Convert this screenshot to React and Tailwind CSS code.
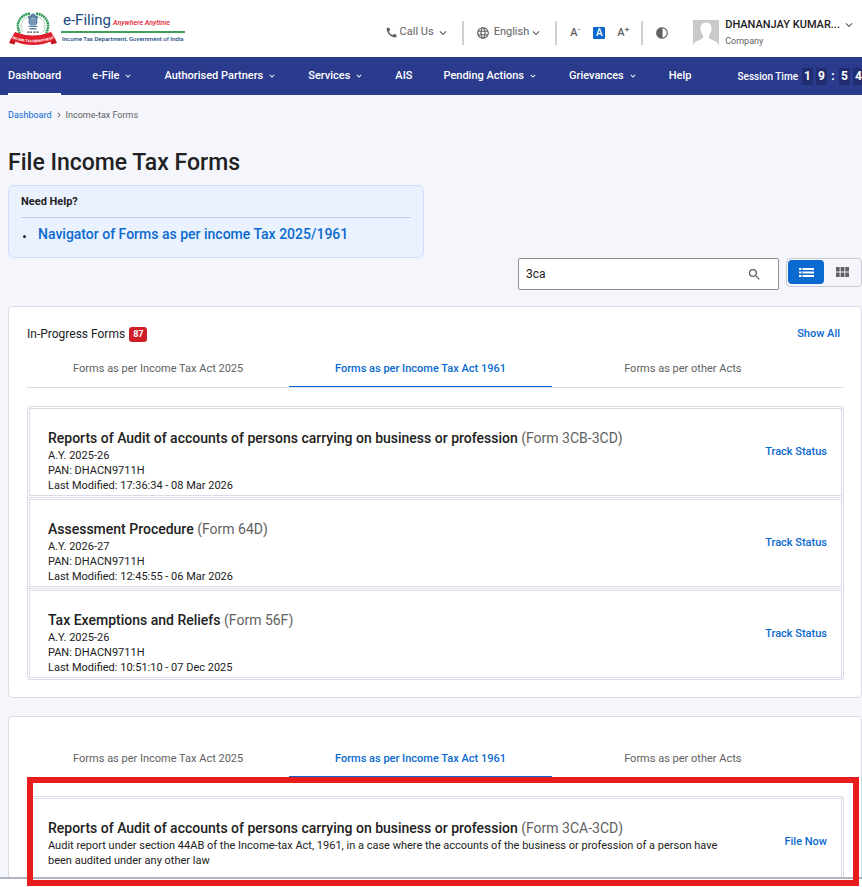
import { useState } from 'react'
import { MdCall, MdLanguage, MdKeyboardArrowDown, MdContrast, MdSearch, MdChevronRight } from 'react-icons/md'

const NAV = [
  { label: 'Dashboard', active: true },
  { label: 'e-File', menu: true },
  { label: 'Authorised Partners', menu: true },
  { label: 'Services', menu: true },
  { label: 'AIS' },
  { label: 'Pending Actions', menu: true },
  { label: 'Grievances', menu: true },
  { label: 'Help' },
]

const TABS = ['Forms as per Income Tax Act 2025', 'Forms as per Income Tax Act 1961', 'Forms as per other Acts']

const IN_PROGRESS = [
  {
    title: 'Reports of Audit of accounts of persons carrying on business or profession',
    form: 'Form 3CB-3CD',
    lines: ['A.Y. 2025-26', 'PAN: DHACN9711H', 'Last Modified: 17:36:34 - 08 Mar 2026'],
  },
  {
    title: 'Assessment Procedure',
    form: 'Form 64D',
    lines: ['A.Y. 2026-27', 'PAN: DHACN9711H', 'Last Modified: 12:45:55 - 06 Mar 2026'],
  },
  {
    title: 'Tax Exemptions and Reliefs',
    form: 'Form 56F',
    lines: ['A.Y. 2025-26', 'PAN: DHACN9711H', 'Last Modified: 10:51:10 - 07 Dec 2025'],
  },
]

const RESULTS = [
  {
    title: 'Reports of Audit of accounts of persons carrying on business or profession',
    form: 'Form 3CA-3CD',
    lines: [
      'Audit report under section 44AB of the Income-tax Act, 1961, in a case where the accounts of the business or profession of a person have been audited under any other law',
    ],
  },
]

function Emblem() {
  return (
    <svg viewBox="0 0 96 68" className="w-12 h-[34px] flex-shrink-0" aria-hidden="true">
      {/* wreath */}
      <g fill="none" stroke="#2f9a55" strokeWidth="5" strokeDasharray="4 1">
        <path d="M42 3C20 6 12 26 22 42" />
        <path d="M54 3C76 6 84 26 74 42" />
      </g>
      <g fill="none" stroke="#8cc9a0" strokeWidth="1.5">
        <path d="M43 8C25 12 20 28 28 40" />
        <path d="M53 8C71 12 76 28 68 40" />
      </g>
      {/* lion capital */}
      <g fill="#5b7ea3">
        <circle cx="48" cy="8" r="5" />
        <circle cx="42" cy="11" r="4" />
        <circle cx="54" cy="11" r="4" />
        <path d="M40 13h16l1 8-3 6H42l-3-6z" />
        <path d="M39 28h18v2H39zM41 32h14v3H41z" />
      </g>
      <path d="M44 12v14M52 12v14M48 10v16" stroke="#c5d3e2" strokeWidth="1.2" />
      <path d="M37 40h4M43 40h3M49 40h4M55 40h4" stroke="#333" strokeWidth="2.5" />
      {/* ribbon */}
      <path d="M0 62l5-10 9 3-3 10z" fill="#c4141f" />
      <path d="M96 62l-5-10-9 3 3 10z" fill="#c4141f" />
      <path d="M12 40Q48 54 84 40L93 55Q48 77 3 55z" fill="#e01f2d" />
      <path id="ribbon" d="M6 53Q48 68 90 53" fill="none" />
      <text fill="#fff" fontSize="6.8" fontWeight="700" fontFamily="Roboto, sans-serif" textAnchor="middle">
        <textPath href="#ribbon" startOffset="50%">INCOME TAX DEPARTMENT</textPath>
      </text>
    </svg>
  )
}

function Header() {
  return (
    <header className="flex items-center h-[57px] pl-[9px] pr-1.5 bg-white flex-shrink-0">
      <a href="#" className="flex items-center gap-1">
        <Emblem />
        <div className="whitespace-nowrap">
          <p className="flex items-baseline gap-0.5 px-0.5 leading-4 border-b-2 border-[#43a05c]">
            <span className="text-[15px] text-[#20497f]">e-Filing</span>
            <span className="text-[7px] italic font-medium text-[#e0202f]">Anywhere Anytime</span>
          </p>
          <p className="px-px text-[6px] leading-3 font-medium text-[#20497f]">
            Income Tax Department, Government of India
          </p>
        </div>
      </a>

      <div className="flex items-center ml-auto pt-2 text-[11px] text-[#616161] whitespace-nowrap">
        <button className="flex items-center gap-0.5">
          <MdCall size={13} />
          <span>Call Us</span>
          <MdKeyboardArrowDown size={14} />
        </button>
        <span className="w-0.5 h-6 mx-3 bg-[#cfcfcf]" />
        <button className="flex items-center gap-1">
          <MdLanguage size={14} />
          <span>English</span>
          <MdKeyboardArrowDown size={14} className="-ml-1" />
        </button>
        <span className="w-0.5 h-6 mx-3 bg-[#cfcfcf]" />
        <div className="flex items-center gap-3 font-medium">
          <button className="w-3 leading-4">A<sup className="text-[8px]">-</sup></button>
          <button className="w-3 h-3 rounded-[1px] bg-[#0a6ad0] text-white text-[10px] leading-3">A</button>
          <button className="w-3 leading-4">A<sup className="text-[8px]">+</sup></button>
        </div>
        <span className="w-0.5 h-6 mx-3 bg-[#cfcfcf]" />
        <button aria-label="Contrast"><MdContrast size={14} /></button>
      </div>

      <button className="flex items-center gap-1.5 ml-6 pt-2 text-left whitespace-nowrap">
        <svg viewBox="0 0 26 26" className="w-[26px] h-[26px]" aria-hidden="true">
          <path d="M0 0h26v26H0z" fill="#c9c9c9" />
          <path d="M13 2.500c-4 0-6 3-5.500 7 .3 3 1.500 4.500 2.500 6v2C9 20.500 1 20 0 26h26c-1-6-9-5.500-10-8.500v-2c1-1.500 2.200-3 2.500-6C19 5.500 17 2.500 13 2.500z" fill="#fff" />
        </svg>
        <span>
          <span className="flex items-center gap-0.5 text-[11px] leading-4 font-medium text-[#212121]">
            DHANANJAY KUMAR...
            <MdKeyboardArrowDown size={14} className="text-[#616161]" />
          </span>
          <span className="block text-[9px] leading-4 text-[#616161]">Company</span>
        </span>
      </button>
    </header>
  )
}

function SessionTime() {
  const box = 'w-[11px] h-[17px] bg-[#212d70] text-center'
  return (
    <div className="flex items-center gap-1 ml-auto -mr-0.5 flex-shrink-0">
      <span className="text-[10px] font-medium">Session Time</span>
      <div className="flex items-center gap-[3px] text-xs leading-[17px] font-bold">
        <span className={box}>1</span>
        <span className={box}>9</span>
        <span className="w-[6px] text-center">:</span>
        <span className={box}>5</span>
        <span className={box}>4</span>
      </div>
    </div>
  )
}

function NavBar() {
  return (
    <nav className="flex h-[38px] pl-2 bg-[#2a3a8c] text-white flex-shrink-0 whitespace-nowrap overflow-hidden">
      <div className="flex gap-[31px]">
        {NAV.map(({ label, menu, active }) => (
          <a key={label} href="#" className={`flex items-center gap-1 pt-0.5 text-[11px] font-medium border-b-2 ${active ? 'border-white' : 'border-transparent'}`}>
            {label}
            {menu && <MdKeyboardArrowDown size={10} />}
          </a>
        ))}
      </div>
      <SessionTime />
    </nav>
  )
}

function Tabs() {
  const [tab, setTab] = useState(1)
  return (
    <div role="tablist" className="flex pr-[30px] border-b border-[#dadbe9]">
      {TABS.map((t, i) => (
        <button
          key={t}
          role="tab"
          aria-selected={tab === i}
          onClick={() => setTab(i)}
          className={`flex-1 h-[37px] pt-0.5 text-[11px] border-b ${tab === i ? 'text-[#0a6ad0] border-[#0a6ad0] font-medium' : 'text-[#616161] border-transparent'}`}
        >
          {t}
        </button>
      ))}
    </div>
  )
}

function FormList({ items, action }) {
  return (
    <ul className="mt-[18px] border-t border-x border-[#dadbe9] rounded-sm">
      {items.map(({ title, form, lines }) => (
        <li key={form} className="p-px border-b border-[#dadbe9]">
          <div className="flex items-center justify-between min-h-[88px] pl-[18px] pr-[14px] border border-[#dadbe9]">
            <div className="max-w-[680px] self-start pt-[19px] pb-0.5 text-[11px] leading-[15px] text-[#212121]">
              <h3 className="text-sm leading-5 font-medium">
                {title} <span className="font-normal text-[#616161]">({form})</span>
              </h3>
              {lines.map(l => <p key={l}>{l}</p>)}
            </div>
            <a href="#" className="text-[11px] font-medium text-[#0a6ad0] whitespace-nowrap">{action}</a>
          </div>
        </li>
      ))}
    </ul>
  )
}

export default function App() {
  const [query, setQuery] = useState('3ca')

  return (
    <div className="relative flex flex-col h-screen overflow-hidden bg-[#f5f6fb] font-['Roboto',sans-serif] text-[#212121]">
      <Header />
      <NavBar />

      <main className="flex-1 min-h-0 overflow-hidden pl-2 pt-3">
        {/* Breadcrumb */}
        <div className="flex items-center gap-0.5 text-[9px] leading-4">
          <a href="#" className="text-[#0a6ad0]">Dashboard</a>
          <MdChevronRight size={10} className="text-[#616161]" />
          <span className="text-[#616161]">Income-tax Forms</span>
        </div>

        <h1 className="mt-[26px] text-[23px] leading-7 font-medium">File Income Tax Forms</h1>

        {/* Help */}
        <section className="max-w-[416px] mt-2 px-3 pt-2 pb-[13px] bg-[#eaf2ff] border border-[#cbdffb] rounded-md">
          <h2 className="pb-[7px] text-[11px] leading-4 font-bold border-b border-[#c3cbe8]">Need Help?</h2>
          <ul className="pt-1.5 text-sm leading-5">
            <li className="flex items-center gap-3 pl-0.5">
              <span className="w-[3px] h-[3px] mt-1 rounded-full bg-[#212121]" />
              <a href="#" className="font-medium text-[#0a6ad0]">Navigator of Forms as per income Tax 2025/1961</a>
            </li>
          </ul>
        </section>

        {/* Search and view switch */}
        <div className="flex items-start justify-end gap-[7px]">
          <label className="flex items-center w-[261px] h-8 pl-[7px] pr-4 bg-white border border-[#8f8f8f] rounded-xs">
            <input
              aria-label="Search forms"
              value={query}
              onChange={e => setQuery(e.target.value)}
              className="flex-1 min-w-0 text-xs outline-none"
            />
            <MdSearch size={15} className="text-[#616161]" />
          </label>
          <div className="flex w-[76px] h-[29px] p-px border border-[#c9cad3] rounded-sm">
            <button aria-label="List view" className="flex items-center justify-center w-9 h-6 rounded-sm bg-[#0a6ad0] text-white">
              <svg viewBox="0 0 15 9" className="w-[15px] h-[9px]" fill="currentColor" aria-hidden="true">
                <path d="M0 0h2.500v2H0zM3.500 0H15v2H3.500zM0 3.500h2.500v2H0zM3.500 3.500H15v2H3.500zM0 7h2.500v2H0zM3.500 7H15v2H3.500z" />
              </svg>
            </button>
            <button aria-label="Grid view" className="flex items-center justify-center flex-1 h-6 text-[#616161]">
              <svg viewBox="0 0 13 10" className="w-[13px] h-2.5" fill="currentColor" aria-hidden="true">
                <path d="M0 0h3.700v4.500H0zM4.600 0h3.800v4.500H4.600zM9.300 0H13v4.500H9.300zM0 5.500h3.700V10H0zM4.600 5.500h3.800V10H4.600zM9.300 5.500H13V10H9.300z" />
              </svg>
            </button>
          </div>
        </div>

        {/* In progress */}
        <section className="mt-4 pl-[18px] pr-[17px] pt-[15px] pb-[17px] bg-white border border-[#dadbe9] rounded-sm">
          <div className="flex items-center justify-between h-6 mb-1 pr-1">
            <h2 className="flex items-center gap-1 text-xs">
              In-Progress Forms
              <span className="px-1 rounded-[3px] bg-[#ce2029] text-white text-[9px] leading-[15px] font-bold">87</span>
            </h2>
            <a href="#" className="text-[11px] font-medium text-[#0a6ad0]">Show All</a>
          </div>
          <Tabs />
          <FormList items={IN_PROGRESS} action="Track Status" />
        </section>

        {/* Search results */}
        <section className="mt-[18px] pl-[18px] pr-[17px] pt-[23px] pb-[17px] bg-white border border-[#dadbe9] rounded-sm">
          <Tabs />
          <FormList items={RESULTS} action="File Now" />
        </section>
      </main>

      <footer className="h-2.5 bg-white border-t-2 border-[#b0b4c3] flex-shrink-0" />

      {/* Highlight over the matching form */}
      <div className="absolute left-[27px] right-[3px] bottom-px h-[109px] border-[6px] border-[#e81c1c] pointer-events-none" />
    </div>
  )
}
